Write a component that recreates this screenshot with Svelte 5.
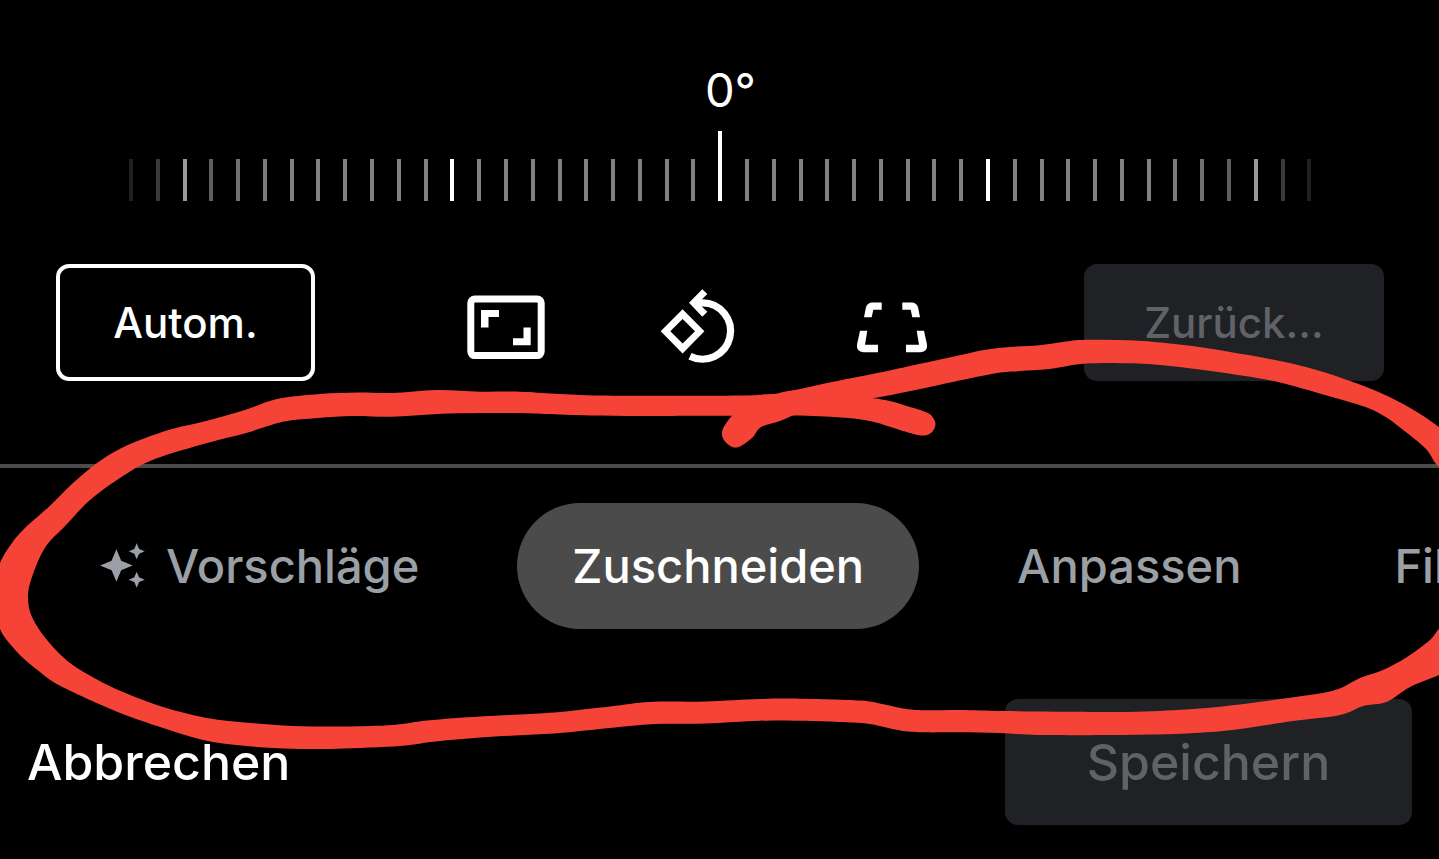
<script>
  const edgeFade = [0.26, 0.45, 0.6, 0.74, 0.88, 0.96];
  const ticks = Array.from({ length: 45 }, (_, i) => {
    const fromEdge = Math.min(i, 44 - i);
    return {
      major: (i - 2) % 10 === 0,
      current: i === 22,
      opacity: edgeFade[fromEdge] ?? 1
    };
  });

  const tabs = ['Vorschläge', 'Zuschneiden', 'Anpassen', 'Filter'];
  let active = $state('Zuschneiden');
  let angle = $state(0);

  // Closed smooth curve through all points (Catmull-Rom converted to cubic Béziers).
  function smooth(points) {
    const n = points.length;
    const at = (i) => points[(i + n) % n];
    let d = `M${points[0]}`;
    for (let i = 0; i < n; i++) {
      const [a, b, c, e] = [at(i - 1), at(i), at(i + 1), at(i + 2)];
      d += `C${b[0] + (c[0] - a[0]) / 6} ${b[1] + (c[1] - a[1]) / 6} ${c[0] - (e[0] - b[0]) / 6} ${c[1] - (e[1] - b[1]) / 6} ${c[0]} ${c[1]}`;
    }
    return d + 'Z';
  }

  // Long stroke: top edge leftwards, round the left side, along the bottom to the right edge and back.
  const loop = smooth([
    [840, 394], [872, 398], [892, 401.5], [910, 407], [923, 411], [931, 415], [935.5, 424],
    [931, 433], [921, 435.5], [903, 431], [872, 421.5], [841, 417.5], [794, 415.5], [740, 415.7], [700, 415.7],
    [640, 416], [590, 415.5], [545, 414], [515, 413], [480, 413], [437, 414], [392, 416.7], [353, 416], [318, 418],
    [283, 421.7], [247, 432.7], [200, 445], [150, 461], [117, 480], [90, 500], [66, 525], [45, 547.7],
    [32, 577], [28, 597], [32, 617], [47, 640], [70, 663], [96, 679], [123, 692], [163, 707], [207, 718],
    [250, 723], [293, 726], [345, 726.5], [393, 725], [427, 720.5], [480, 716.5], [520, 714.5], [560, 712], [610, 706.5],
    [650, 702], [705, 701.5], [760, 699], [800, 698.7], [860, 700.5], [882, 704], [903, 708.5], [925, 710.3],
    [960, 710], [1003, 711], [1070, 711.7], [1137, 711.7], [1193, 709], [1235, 705], [1280, 699], [1333, 690.7],
    [1360, 678], [1383, 670], [1407, 657], [1430, 640], [1442, 628], [1460, 640], [1460, 665],
    [1439, 675], [1410, 687], [1387, 701.7], [1363, 706], [1340, 715], [1293, 721], [1240, 729], [1200, 732.7],
    [1140, 734.7], [1040, 735], [1000, 733], [960, 732.3], [925, 732.3], [903, 731], [882, 726.5], [860, 723],
    [800, 720.7], [760, 720.7], [705, 723.5], [655, 724], [610, 728], [560, 733], [520, 735.3], [480, 737.5],
    [433, 741.7], [400, 746], [337, 748.7], [293, 748.7], [247, 746], [203, 740], [157, 726], [113, 710], [60, 685.7],
    [40, 672], [23, 658], [10, 644], [0, 629], [-12, 597], [0, 563], [12, 543], [25, 528], [50, 505.7], [73, 483],
    [97, 463], [118, 450], [140, 440], [172, 429], [207, 420.7], [245, 410], [277, 399], [320, 394], [357, 392.5], [392, 393],
    [437, 390], [480, 391.7], [520, 391.7], [555, 393.7], [600, 395.5], [670, 395.8], [742, 395.5], [775, 394]
  ]);

  // Short stroke: from the blob up over the right side and out of view.
  const tail = smooth([
    [737, 447.5], [726, 442.5], [722, 432], [731, 417], [748, 404], [775, 394], [800, 389], [832, 382], [884, 371.7],
    [912, 365.5], [940, 359.5], [963, 354.5], [987, 349.5], [1010, 347], [1039, 345.3], [1063, 342], [1086, 339.8],
    [1133, 340.5], [1170, 343.5], [1209, 348.5], [1275, 360], [1315, 369.5], [1350, 381], [1383, 394], [1412, 409], [1439, 427],
    [1460, 445], [1460, 470], [1439, 466.7], [1426, 449], [1402, 429], [1384, 416], [1364, 406.5], [1325, 395], [1280, 382.5],
    [1245, 376], [1209, 370.7], [1170, 366], [1133, 363.3], [1086, 363.5], [1049, 369], [1020, 371], [997, 373],
    [955, 381.5], [912, 390.7], [872, 398.5], [840, 404], [800, 413], [780, 421], [761, 427], [752, 438]
  ]);
</script>

<main class="editor">
  <section class="rotation">
    <output class="angle" for="angle">{angle}°</output>
    <div class="ruler">
      {#each ticks as tick}
        <span
          class="tick"
          class:major={tick.major}
          class:current={tick.current}
          style="opacity: {tick.opacity}"
        ></span>
      {/each}
      <input id="angle" type="range" min="-45" max="45" bind:value={angle} aria-label="Drehwinkel" />
    </div>
  </section>

  <section class="tools">
    <button class="tool-button outlined">Autom.</button>
    <div class="icons">
      <button class="icon" aria-label="Seitenverhältnis">
        <svg viewBox="1 0 96 96" fill="#fff">
          <rect x="12.8" y="24" width="70.4" height="56.6" rx="4" fill="none" stroke="#fff" stroke-width="7" />
          <path d="M23 35h18v7H30.500v10.500H23zM72.700 70.200H55v-7h10.500V52.500h7.200z" />
        </svg>
      </button>
      <button class="icon" aria-label="Drehen">
        <svg viewBox="2 0 96 96" fill="#fff">
          <path fill-rule="evenodd" d="M10.700 56.300 32.600 34.200 54.400 56.300 32.600 78.500zM20.300 56.300 32.600 68.500 45 56.300 32.600 44.100z" />
          <path d="M48 27.900H52.400A28.100 28.100 0 1 1 40 81.200" fill="none" stroke="#fff" stroke-width="7.200" />
          <path d="M39 27.800 52.300 14.200 57.300 18.900 51.500 24.800V31.200L57.300 36.800 52.300 41.800z" />
        </svg>
      </button>
      <button class="icon" aria-label="Perspektive">
        <svg viewBox="1 0 96 96" fill="#fff">
          <g id="perspective-half">
            <path d="M20 42.200 21.800 33Q23 27.500 28.700 27.500H37.700V34.800H29.300L27.700 42.200z" />
            <path d="M16 55.800H23.300L21 69.800H34V77.200H19.300Q12.200 76.500 13 69.500z" />
          </g>
          <use href="#perspective-half" transform="matrix(-1 0 0 1 96 0)" />
        </svg>
      </button>
    </div>
    <button class="tool-button filled" disabled>Zurück…</button>
  </section>

  <nav class="tabs">
    {#each tabs as tab}
      <button class="tab" class:active={active === tab} onclick={() => (active = tab)}>
        {#if tab === 'Vorschläge'}
          <svg class="sparkle" viewBox="0 0 46 46" fill="currentColor" aria-hidden="true">
            <path d="M16.400 6.200 21.200 17.700 32.700 22.500 21.200 27.300 16.400 38.800 11.600 27.300 .1 22.500 11.600 17.700z" />
            <path d="M36.700 .3 39.100 5.900 44.700 8.300 39.100 10.700 36.700 16.300 34.300 10.700 28.700 8.300 34.300 5.900z" />
            <path d="M36.700 28.700 39.100 34.300 44.700 36.700 39.100 39.100 36.700 44.700 34.300 39.100 28.700 36.700 34.300 34.300z" />
          </svg>
        {/if}
        {tab}
      </button>
    {/each}
  </nav>

  <footer class="actions">
    <button class="cancel">Abbrechen</button>
    <button class="save" disabled>Speichern</button>
  </footer>

  <svg class="marker" viewBox="0 0 1439 859" preserveAspectRatio="none" aria-hidden="true">
    <path d={loop} />
    <path d={tail} />
  </svg>
</main>

<style>
  :global(body) {
    margin: 0;
    background: #000;
  }

  .editor {
    position: relative;
    display: flex;
    flex-direction: column;
    min-height: 100vh;
    box-sizing: border-box;
    padding-bottom: 34px;
    overflow: hidden;
    background: #000;
    color: #fff;
    font-family: Inter, Roboto, sans-serif;
    font-size: 47px;
    font-weight: 500;
    line-height: 60px;
  }

  button {
    margin: 0;
    padding: 0;
    border: 0;
    background: none;
    color: inherit;
    font: inherit;
    white-space: nowrap;
    cursor: pointer;
  }

  button:disabled {
    background: #202124;
    color: #5f6368;
    cursor: default;
  }

  .rotation {
    display: flex;
    flex-direction: column;
    gap: 11px;
    padding: 60px 127px 0 129px;
  }

  .angle {
    padding-left: 20px;
    font-weight: 400;
    text-align: center;
  }

  .ruler {
    position: relative;
    display: flex;
    align-items: flex-end;
    justify-content: space-between;
    height: 70px;
  }

  .ruler input {
    position: absolute;
    inset: 0;
    width: 100%;
    height: 100%;
    margin: 0;
    opacity: 0;
  }

  .tick {
    width: 4px;
    height: 42px;
    background: #808080;
  }

  .tick.major {
    background: #fff;
  }

  .tick.current {
    height: 70px;
  }

  .tools {
    display: flex;
    align-items: center;
    justify-content: space-between;
    padding: 63px 55px 83px 56px;
    border-bottom: 4px solid #4b4b4b;
  }

  .tool-button {
    box-sizing: border-box;
    height: 117px;
    border-radius: 13px;
    font-size: 42px;
  }

  .outlined {
    width: 259px;
    border: 4px solid #fff;
  }

  .filled {
    width: 300px;
  }

  .icons {
    display: flex;
    gap: 97px;
  }

  .icon,
  .icon svg {
    display: block;
    width: 96px;
    height: 96px;
  }

  .tabs {
    display: flex;
    gap: 43px;
    padding: 35px 0 70px 45px;
  }

  .tab {
    display: flex;
    flex: none;
    align-items: center;
    gap: 20px;
    height: 126px;
    padding: 0 55px;
    border-radius: 63px;
    color: #9aa0a6;
  }

  .tab.active {
    background: #4b4b4b;
    color: #fff;
  }

  .sparkle {
    width: 46px;
    height: 46px;
  }

  .actions {
    display: flex;
    align-items: center;
    justify-content: space-between;
    padding: 0 27px;
    font-size: 50px;
  }

  .save {
    width: 407px;
    height: 126px;
    border-radius: 13px;
  }

  .marker {
    position: absolute;
    inset: 0;
    width: 100%;
    height: 100%;
    fill: #f54437;
    pointer-events: none;
  }
</style>
